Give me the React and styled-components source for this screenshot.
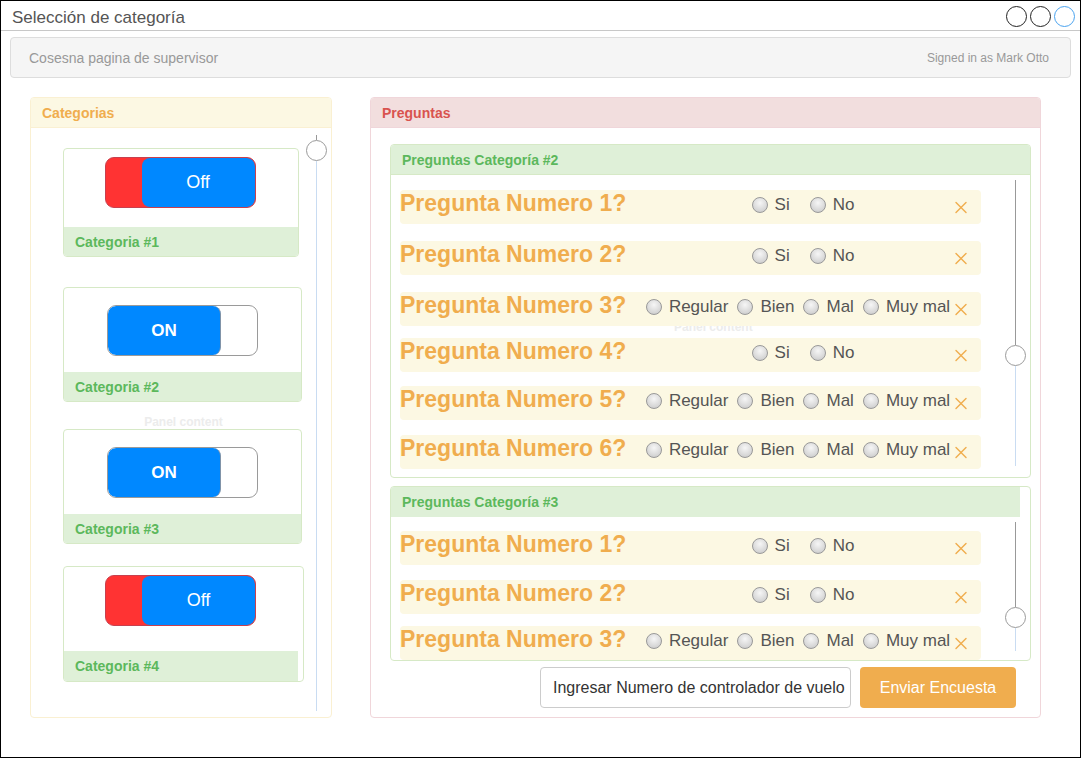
import styled, { createGlobalStyle } from "styled-components";
import { X } from "lucide-react";

const GlobalStyle = createGlobalStyle`
  body {
    margin: 0;
    background: #fff;
    font-family: "Liberation Sans", Arial, sans-serif;
  }
  * { box-sizing: border-box; }
`;

const Frame = styled.div`
  width: 1081px;
  height: 758px;
  border: 1px solid #000;
  background: #fff;
  overflow: hidden;
`;

const TitleBar = styled.div`
  height: 30px;
  border-bottom: 1px solid #c8c8c8;
  display: flex;
  align-items: center;
  justify-content: space-between;
  padding: 1px 5px 0 11px;
`;

const Title = styled.div`
  font-size: 17px;
  color: #555;
  padding-top: 3px;
`;

const WinButtons = styled.div`
  display: flex;
  gap: 3px;
`;

const WinButton = styled.span`
  width: 21px;
  height: 21px;
  border-radius: 50%;
  border: 1px solid ${({ $active }) => ($active ? "#4aa3ef" : "#222")};
`;

const Navbar = styled.div`
  margin: 6px 0 0 9px;
  width: 1061px;
  height: 41px;
  background: #f5f5f5;
  border: 1px solid #ddd;
  border-radius: 4px;
  display: flex;
  align-items: center;
  justify-content: space-between;
  padding: 0 21px 0 18px;
  color: #999;
`;

const Brand = styled.span`
  font-size: 14px;
`;

const SignedIn = styled.span`
  font-size: 12px;
`;

const Main = styled.div`
  display: flex;
  align-items: flex-start;
  gap: 38px;
  margin-top: 19px;
  padding-left: 29px;
`;

const Panel = styled.section`
  width: ${({ $w }) => $w}px;
  height: 621px;
  border: 1px solid ${({ $border }) => $border};
  border-radius: 4px;
  display: flex;
  flex-direction: column;
  overflow: hidden;
`;

const PanelHeading = styled.div`
  height: 30px;
  flex: none;
  display: flex;
  align-items: center;
  padding-left: 11px;
  background: ${({ $bg }) => $bg};
  color: ${({ $color }) => $color};
  border-bottom: 1px solid ${({ $border }) => $border};
  font-size: 14px;
  font-weight: bold;
  margin-right: ${({ $mr }) => $mr || 0}px;
`;

const LeftBody = styled.div`
  flex: 1;
  display: flex;
`;

const CardColumn = styled.div`
  padding-left: 32px;
  display: flex;
  flex-direction: column;
`;

const Card = styled.div`
  width: ${({ $w }) => $w}px;
  margin-top: ${({ $mt }) => $mt}px;
  border: 1px solid #d6e9c6;
  border-radius: 4px;
  overflow: hidden;
  background: #fff;
`;

const CardBody = styled.div`
  height: ${({ $h }) => $h}px;
  padding: ${({ $pt }) => $pt}px ${({ $pr }) => $pr}px 0 0;
  display: flex;
  justify-content: center;
  align-items: flex-start;
`;

const CardFooter = styled.div`
  height: ${({ $h }) => $h}px;
  margin-right: ${({ $mr }) => $mr}px;
  background: #dff0d8;
  padding-left: 11px;
  display: flex;
  align-items: center;
  color: #5cb85c;
  font-size: 14px;
  font-weight: bold;
`;

const Toggle = styled.div`
  width: 151px;
  height: 51px;
  border-radius: 9px;
  display: flex;
  overflow: hidden;
  justify-content: ${({ $on }) => ($on ? "flex-start" : "flex-end")};
  border: 1px solid ${({ $on }) => ($on ? "#9a9a9a" : "#c8404e")};
  background: ${({ $on }) => ($on ? "#fff" : "#ff3333")};
`;

const ToggleKnob = styled.div`
  width: 113px;
  height: 100%;
  border-radius: 8px;
  background: #0088ff;
  color: #fff;
  display: flex;
  align-items: center;
  justify-content: center;
  font-size: ${({ $on }) => ($on ? 17 : 18)}px;
  font-weight: ${({ $on }) => ($on ? "bold" : "normal")};
  border-right: ${({ $on }) => ($on ? "1px solid #8093a8" : "none")};
`;

const GhostText = styled.div`
  margin-top: 13px;
  height: 14px;
  line-height: 14px;
  text-align: center;
  font-size: 12px;
  font-weight: bold;
  color: #ececec;
`;

const SliderRail = styled.div`
  width: 21px;
  flex: none;
  margin-left: auto;
  margin-right: ${({ $mr }) => $mr}px;
  display: flex;
  flex-direction: column;
  align-items: center;
  padding: ${({ $pt }) => $pt}px 0 ${({ $pb }) => $pb}px;
`;

const RailTop = styled.div`
  width: 1px;
  height: ${({ $h }) => $h}px;
  background: #999;
  flex: none;
`;

const Knob = styled.div`
  width: 21px;
  height: 21px;
  flex: none;
  border-radius: 50%;
  border: 1px solid #9a9a9a;
  background: #fff;
`;

const RailBottom = styled.div`
  width: 1px;
  flex: 1;
  background: #c9dcf2;
`;

const RightBody = styled.div`
  flex: 1;
  display: flex;
  flex-direction: column;
  padding: 16px 9px 0 19px;
`;

const SubPanel = styled.div`
  height: ${({ $h }) => $h}px;
  margin-top: ${({ $mt }) => $mt}px;
  flex: none;
  border: 1px solid #d6e9c6;
  border-radius: 4px;
  display: flex;
  flex-direction: column;
  overflow: hidden;
`;

const SubBody = styled.div`
  flex: 1;
  display: flex;
  position: relative;
  overflow: hidden;
`;

const RowList = styled.div`
  width: 590px;
  padding: ${({ $pt }) => $pt}px 0 0 9px;
  display: flex;
  flex-direction: column;
  position: relative;
  z-index: 1;
`;

const GhostOverlay = styled.div`
  position: absolute;
  left: 283px;
  top: 145px;
  font-size: 12px;
  font-weight: bold;
  color: #ececec;
`;

const QRow = styled.div`
  height: 34px;
  flex: none;
  margin-top: ${({ $mt }) => $mt}px;
  background: #fcf8e3;
  border-radius: 4px;
  display: flex;
  align-items: flex-start;
`;

const QText = styled.div`
  width: 245px;
  flex: none;
  font-size: 23px;
  line-height: 26px;
  font-weight: bold;
  color: #f0ad4e;
  white-space: nowrap;
`;

const Options = styled.div`
  flex: 1;
  height: 30px;
  display: flex;
  align-items: center;
  justify-content: center;
  gap: ${({ $gap }) => $gap}px;
  padding-left: ${({ $shift }) => $shift}px;
  white-space: nowrap;
`;

const Option = styled.label`
  display: flex;
  align-items: center;
  gap: 7px;
  font-size: 17px;
  color: #555;
`;

const Radio = styled.span`
  width: 16px;
  height: 16px;
  flex: none;
  border-radius: 50%;
  border: 1px solid #999;
  background: radial-gradient(circle at 50% 35%, #f6f6f6 0%, #dcdcdc 55%, #c4c4c4 100%);
`;

const Close = styled.span`
  width: 30px;
  flex: none;
  margin-top: 4px;
  padding-right: 10px;
  display: flex;
  justify-content: center;
  color: #f0ad4e;
`;

const Actions = styled.div`
  margin-top: 6px;
  display: flex;
  justify-content: flex-end;
  gap: 9px;
  padding-right: 15px;
`;

const FlightInput = styled.input`
  width: 311px;
  height: 41px;
  border: 1px solid #ccc;
  border-radius: 4px;
  padding: 0 0 0 12px;
  font-family: inherit;
  font-size: 16px;
  color: #333;
  outline: none;
`;

const SendButton = styled.button`
  width: 156px;
  height: 41px;
  border: none;
  border-radius: 4px;
  background: #f0ad4e;
  color: #fff;
  font-family: inherit;
  font-size: 16px;
`;

const categories = [
  { name: "Categoria #1", on: false, w: 236, mt: 20, h: 78, pt: 8, fh: 29, pr: 2, fmr: 0 },
  { name: "Categoria #2", on: true, w: 239, mt: 30, h: 84, pt: 17, fh: 29, pr: 0, fmr: 0 },
  { name: "Categoria #3", on: true, w: 239, mt: 0, h: 84, pt: 17, fh: 29, pr: 0, fmr: 0, ghost: true },
  { name: "Categoria #4", on: false, w: 241, mt: 22, h: 84, pt: 8, fh: 30, pr: 6, fmr: 5 },
];

const YES_NO = ["Si", "No"];
const SCALE = ["Regular", "Bien", "Mal", "Muy mal"];

const group2 = [
  { n: 1, opts: YES_NO, mt: 0 },
  { n: 2, opts: YES_NO, mt: 17 },
  { n: 3, opts: SCALE, mt: 17 },
  { n: 4, opts: YES_NO, mt: 12 },
  { n: 5, opts: SCALE, mt: 14 },
  { n: 6, opts: SCALE, mt: 15 },
];

const group3 = [
  { n: 1, opts: YES_NO, mt: 0 },
  { n: 2, opts: YES_NO, mt: 15 },
  { n: 3, opts: SCALE, mt: 12 },
];

const Slider = ({ pt, pb, top, mr = 4 }) => (
  <SliderRail $pt={pt} $pb={pb} $mr={mr}>
    <RailTop $h={top} />
    <Knob />
    <RailBottom />
  </SliderRail>
);

const Question = ({ q }) => {
  const short = q.opts.length === 2;
  return (
    <QRow $mt={q.mt}>
      <QText>Pregunta Numero {q.n}?</QText>
      <Options $gap={short ? 20 : 9} $shift={short ? 10 : 0}>
        {q.opts.map((o) => (
          <Option key={o}>
            <Radio />
            {o}
          </Option>
        ))}
      </Options>
      <Close>
        <X size={27} strokeWidth={1.7} />
      </Close>
    </QRow>
  );
};

const CategoryCard = ({ c }) => (
  <>
    {c.ghost && <GhostText>Panel content</GhostText>}
    <Card $w={c.w} $mt={c.mt}>
      <CardBody $h={c.h} $pt={c.pt} $pr={c.pr}>
        <Toggle $on={c.on}>
          <ToggleKnob $on={c.on}>{c.on ? "ON" : "Off"}</ToggleKnob>
        </Toggle>
      </CardBody>
      <CardFooter $h={c.fh} $mr={c.fmr}>
        {c.name}
      </CardFooter>
    </Card>
  </>
);

export default function App() {
  return (
    <>
      <GlobalStyle />
      <Frame>
        <TitleBar>
          <Title>Selección de categoría</Title>
          <WinButtons>
            <WinButton />
            <WinButton />
            <WinButton $active />
          </WinButtons>
        </TitleBar>

        <Navbar>
          <Brand>Cosesna pagina de supervisor</Brand>
          <SignedIn>Signed in as Mark Otto</SignedIn>
        </Navbar>

        <Main>
          <Panel $w={302} $border="#faf0d2">
            <PanelHeading $bg="#fcf8e3" $color="#f0ad4e" $border="#faf0d2">
              Categorias
            </PanelHeading>
            <LeftBody>
              <CardColumn>
                {categories.map((c) => (
                  <CategoryCard key={c.name} c={c} />
                ))}
              </CardColumn>
              <Slider pt={7} pb={6} top={5} />
            </LeftBody>
          </Panel>

          <Panel $w={671} $border="#f0d6da">
            <PanelHeading $bg="#f2dede" $color="#d9534f" $border="#f0d6da">
              Preguntas
            </PanelHeading>
            <RightBody>
              <SubPanel $h={334} $mt={0}>
                <PanelHeading $bg="#dff0d8" $color="#5cb85c" $border="#d6e9c6">
                  Preguntas Categoría #2
                </PanelHeading>
                <SubBody>
                  <GhostOverlay>Panel content</GhostOverlay>
                  <RowList $pt={15}>
                    {group2.map((q) => (
                      <Question key={q.n} q={q} />
                    ))}
                  </RowList>
                  <Slider pt={5} pb={11} top={165} />
                </SubBody>
              </SubPanel>

              <SubPanel $h={175} $mt={8}>
                <PanelHeading $bg="#dff0d8" $color="#5cb85c" $border="#dff0d8" $mr={10}>
                  Preguntas Categoría #3
                </PanelHeading>
                <SubBody>
                  <RowList $pt={14}>
                    {group3.map((q) => (
                      <Question key={q.n} q={q} />
                    ))}
                  </RowList>
                  <Slider pt={5} pb={9} top={85} />
                </SubBody>
              </SubPanel>

              <Actions>
                <FlightInput readOnly defaultValue="Ingresar Numero de controlador de vuelo" />
                <SendButton>Enviar Encuesta</SendButton>
              </Actions>
            </RightBody>
          </Panel>
        </Main>
      </Frame>
    </>
  );
}
